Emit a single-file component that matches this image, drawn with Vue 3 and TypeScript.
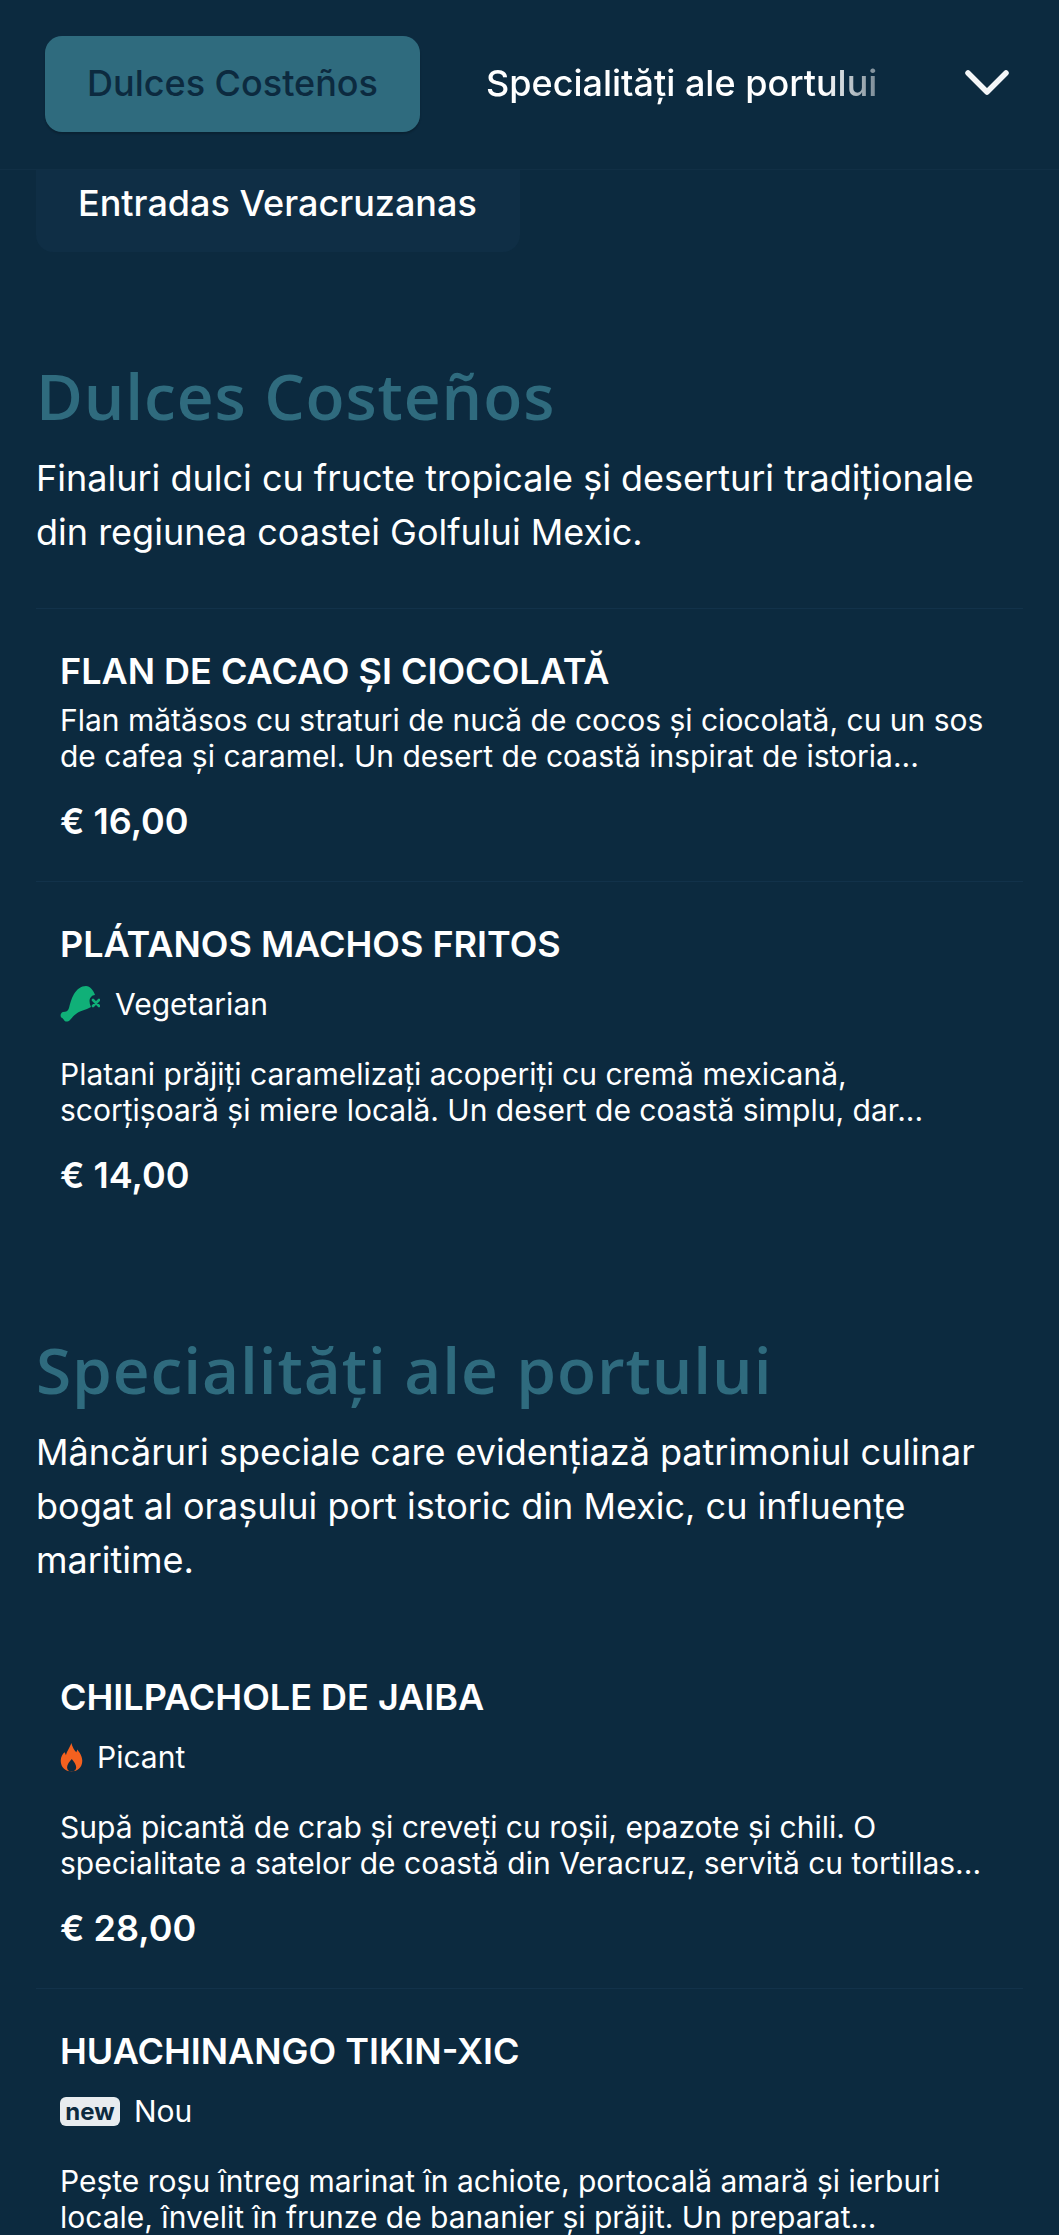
<script setup lang="ts">
interface Tag { kind: 'veg' | 'hot' | 'new'; label: string }
interface Dish { name: string; tag?: Tag; desc: string[]; price: string }
interface Section { title: string; intro: string[]; dishes: Dish[]; plain?: boolean }

const sections: Section[] = [
  {
    title: 'Dulces Costeños',
    intro: ['Finaluri dulci cu fructe tropicale și deserturi tradiționale', 'din regiunea coastei Golfului Mexic.'],
    dishes: [
      {
        name: 'FLAN DE CACAO ȘI CIOCOLATĂ',
        desc: ['Flan mătăsos cu straturi de nucă de cocos și ciocolată, cu un sos', 'de cafea și caramel. Un desert de coastă inspirat de istoria...'],
        price: '€ 16,00',
      },
      {
        name: 'PLÁTANOS MACHOS FRITOS',
        tag: { kind: 'veg', label: 'Vegetarian' },
        desc: ['Platani prăjiți caramelizați acoperiți cu cremă mexicană,', 'scorțișoară și miere locală. Un desert de coastă simplu, dar...'],
        price: '€ 14,00',
      },
    ],
  },
  {
    title: 'Specialități ale portului',
    plain: true,
    intro: ['Mâncăruri speciale care evidențiază patrimoniul culinar', 'bogat al orașului port istoric din Mexic, cu influențe', 'maritime.'],
    dishes: [
      {
        name: 'CHILPACHOLE DE JAIBA',
        tag: { kind: 'hot', label: 'Picant' },
        desc: ['Supă picantă de crab și creveți cu roșii, epazote și chili. O', 'specialitate a satelor de coastă din Veracruz, servită cu tortillas...'],
        price: '€ 28,00',
      },
      {
        name: 'HUACHINANGO TIKIN-XIC',
        tag: { kind: 'new', label: 'Nou' },
        desc: ['Pește roșu întreg marinat în achiote, portocală amară și ierburi', 'locale, învelit în frunze de bananier și prăjit. Un preparat...'],
        price: '',
      },
    ],
  },
]
</script>

<template>
  <div class="page">
    <header class="nav">
      <button class="tab active">Dulces Costeños</button>
      <div class="tab-next">Specialități ale portului</div>
      <svg class="chev" viewBox="0 0 44 26" fill="none" aria-hidden="true">
        <path d="M3 3 L22 22 L41 3" stroke="#f4f6f8" stroke-width="5.500" stroke-linecap="round" stroke-linejoin="round" />
      </svg>
    </header>
    <div class="pill">Entradas Veracruzanas</div>

    <section v-for="s in sections" :key="s.title" class="section">
      <h2>{{ s.title }}</h2>
      <p class="intro">
        <span v-for="l in s.intro" :key="l" class="line">{{ l }}</span>
      </p>
      <article v-for="d in s.dishes" :key="d.name" class="dish" :class="{ plain: s.plain }">
        <h3>{{ d.name }}</h3>
        <div v-if="d.tag" class="tag">
          <svg v-if="d.tag.kind === 'veg'" class="ico-veg" viewBox="0 0 40 36" aria-hidden="true">
            <path fill="#10b078" d="M3 26C6 26 8 25 9 22C10 18 11 13 14 8C17 3 21 0 26 0C30 0 34 5 35 9C32 9 29.500 12 29.500 15C29.500 17 30 19 31 21C26 24 19 25 16 28C13 30 12 32 10 34C8 36 5 36 4 34C3 33 3 32 2 32C0 31 0 27 3 26z" />
            <path stroke="#10b078" stroke-width="2.600" stroke-linecap="round" d="M33 14l6 6m0-6l-6 6" />
          </svg>
          <svg v-else-if="d.tag.kind === 'hot'" class="ico-hot" viewBox="0 0 24 32" aria-hidden="true">
            <path fill="#f4611f" fill-rule="evenodd" d="M12 1c1 5 3 7 5 10 .7-1 1-2 1-3 3 3 5.500 8 5.500 12 0 7-5 11.500-11.500 11.500S.5 27 .5 20c0-4 2-7 4-9 1 1 1 2 1.500 3C7 10 10 6 12 1zm.3 17c-2.500 3-5 5.500-5 9 0 2 1 3.500 2.500 4.200h4.400C16 30.500 17 29 17 27c0-3.500-2.500-6-4.700-9z" />
          </svg>
          <span v-else class="badge">new</span>
          <span>{{ d.tag.label }}</span>
        </div>
        <p class="desc">
          <span v-for="l in d.desc" :key="l" class="line">{{ l }}</span>
        </p>
        <div v-if="d.price" class="price">{{ d.price }}</div>
      </article>
    </section>
  </div>
</template>

<style>
html, body { margin: 0; background: #0c2a3f; }
</style>

<style scoped>
.page {
  width: 1059px;
  height: 2235px;
  overflow: hidden;
  background: #0c2a3f;
  color: #fff;
  font-family: Inter, "Liberation Sans", sans-serif;
}
.line { display: block; white-space: nowrap; }
.nav {
  position: relative;
  z-index: 2;
  height: 170px;
  box-sizing: border-box;
  padding: 36px 0 0 45px;
  display: flex;
  align-items: flex-start;
  background: #0c2a3f;
  border-bottom: 1px solid #112f45;
}
.tab {
  width: 375px;
  height: 96px;
  border: 0;
  border-radius: 17px;
  background: #2f6b7e;
  box-shadow: 0 2px 2px rgba(0, 0, 0, .2);
  color: #0c2a3f;
  font: 500 36px Inter, sans-serif;
  padding: 0 0 3px;
}
.tab-next {
  width: 392px;
  margin-left: 66px;
  height: 96px;
  line-height: 94px;
  font-size: 36px;
  font-weight: 500;
  white-space: nowrap;
  overflow: hidden;
  -webkit-mask-image: linear-gradient(to right, #000 86%, rgba(0, 0, 0, .45) 100%);
  mask-image: linear-gradient(to right, #000 86%, rgba(0, 0, 0, .45) 100%);
}
.chev { width: 44px; height: 26px; margin: 34px 0 0 87px; }
.pill {
  width: 484px;
  height: 122px;
  margin: -40px 0 0 36px;
  padding: 31px 0 0 42px;
  box-sizing: border-box;
  line-height: 84px;
  font-size: 36px;
  font-weight: 500;
  border-radius: 17px;
  background: #0f2e45;
}
.section { padding: 0 36px; }
h2 {
  margin: 0;
  padding-top: 99px;
  height: 90px;
  line-height: 90px;
  font-family: "Open Sans", sans-serif;
  font-size: 64px;
  font-weight: 600;
  letter-spacing: .9px;
  color: #2f6b7e;
  box-sizing: content-box;
}
.section + .section h2 { padding-top: 90px; }
.intro {
  margin: 10px 0 0;
  font-size: 36px;
  line-height: 54px;
}
.dish {
  padding: 40px 24px 37px;
  border-top: 1px solid #12324a;
}
.intro + .dish { margin-top: 49px; }
.intro + .dish.plain { margin-top: 48px; }
.dish.plain { border-top: 0; }
.dish.plain + .dish.plain { border-top: 1px solid #12324a; }
h3 {
  margin: 0;
  font-size: 36px;
  line-height: 44px;
  font-weight: 600;
}
.tag {
  display: flex;
  align-items: center;
  gap: 14px;
  height: 44px;
  margin-top: 16px;
  font-size: 30px;
}
.ico-veg { width: 40px; height: 36px; margin-right: 1px; }
.ico-hot { width: 23px; height: 30px; }
.badge {
  width: 60px;
  text-align: center;
  background: #e8ecef;
  color: #0c2a3f;
  font-size: 24px;
  font-weight: 700;
  line-height: 29px;
  border-radius: 6px;
}
.desc {
  margin: 9px 0 0;
  font-size: 30px;
  line-height: 36px;
}
.tag + .desc { margin-top: 30px; }
.price {
  margin-top: 24px;
  font-size: 36px;
  line-height: 46px;
  font-weight: 600;
}
</style>
